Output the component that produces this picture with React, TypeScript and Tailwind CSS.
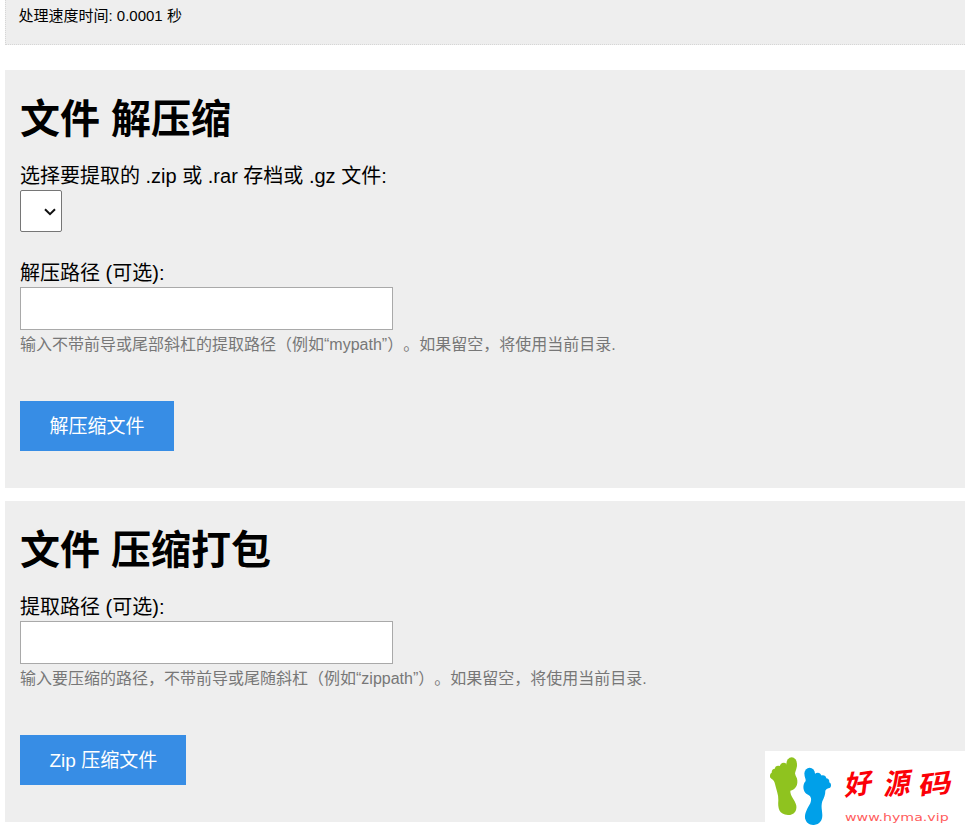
import type { ReactNode } from "react";
import { clsx } from "clsx";

const FUENTE = "font-['Liberation_Sans','Noto_Sans_CJK_SC',sans-serif]";

function Panel({ titulo, className, children }: { titulo: string; className?: string; children: ReactNode }) {
  return (
    <section className={clsx("bg-[#eeeeee] px-[15px] pt-5", className)}>
      <h1 className="h-[58px] text-[40px] leading-[58px] font-bold whitespace-nowrap">{titulo}</h1>
      {children}
    </section>
  );
}

function Campo({ id, label, ayuda }: { id: string; label: string; ayuda: string }) {
  return (
    <div>
      <label htmlFor={id} className="block h-[26px] text-[20px] leading-[26px]">{label}</label>
      <input id={id} type="text" className="mt-px block h-[43px] w-[373px] border border-[#a9a9a9] bg-white px-2 text-lg" />
      <p className="h-[30px] text-[16px] leading-[30px] whitespace-nowrap text-[#777777] [text-spacing-trim:space-all]">{ayuda}</p>
    </div>
  );
}

function Boton({ className, children }: { className?: string; children: ReactNode }) {
  return (
    <button
      type="button"
      className={clsx("mt-[41px] block h-[50px] bg-[#378de5] pt-0.5 pl-[29.5px] text-left text-[19px] whitespace-nowrap text-white", className)}
    >
      {children}
    </button>
  );
}

function Marca() {
  return (
    <div className="fixed top-[751px] left-[765px] h-20 w-[200px] bg-white">
      <svg viewBox="0 0 600 240" className="block h-20 w-[200px]">
        <g fill="#8fc31f">
          <ellipse cx="80" cy="38" rx="16" ry="19" />
          <ellipse cx="56" cy="49" rx="12" ry="14" />
          <ellipse cx="40" cy="57" rx="11" ry="13" />
          <ellipse cx="30" cy="65" rx="10" ry="12" />
          <ellipse cx="23" cy="74" rx="8" ry="9" />
          <path d="M15 74C17 85 28 85 30 99C33 114 41 131 40 148C38 172 42 191 69 192C88 192 96 179 94 164C91 147 75 136 76 119C90 115 98 105 97 89C97 80 91 76 90 67C92 58 96 52 96 40L62 43L25 66Z" />
        </g>
        <g fill="#00a0e9">
          <ellipse cx="134" cy="68" rx="16" ry="18" />
          <ellipse cx="158" cy="78" rx="12" ry="13" />
          <ellipse cx="173" cy="85" rx="11" ry="12" />
          <ellipse cx="183" cy="93" rx="10" ry="11" />
          <ellipse cx="190" cy="103" rx="8" ry="9" />
          <path d="M119 74C121 85 125 88 119 94C112 106 115 122 125 129C137 134 142 142 136 157C128 172 119 184 120 202C124 217 134 223 147 222C164 220 172 209 172 193C172 178 167 168 172 151C177 139 181 132 181 119C184 112 195 112 197 102L181 84L145 66Z" />
        </g>
        <g fill="#fb0007" fontFamily="'Noto Sans CJK SC', sans-serif" fontWeight="700">
          <text fontSize="84" transform="translate(238 134) skewX(-15) rotate(-8)" textLength="80" lengthAdjust="spacingAndGlyphs">好</text>
          <text fontSize="88" transform="translate(355 133) skewX(-15) rotate(-6)" textLength="78" lengthAdjust="spacingAndGlyphs">源</text>
          <text fontSize="80" transform="translate(459 134) skewX(-15) rotate(-8)" textLength="98" lengthAdjust="spacingAndGlyphs">码</text>
        </g>
        <text
          x="240"
          y="209"
          fill="#ff5c5c"
          fontFamily="'DejaVu Sans', sans-serif"
          fontSize="34"
          textLength="311"
          lengthAdjust="spacingAndGlyphs"
        >
          www.hyma.vip
        </text>
      </svg>
    </div>
  );
}

export default function App() {
  return (
    <main className={clsx("h-[831px] overflow-hidden bg-white pl-[5px] text-black", FUENTE)}>
      <p className="h-[45px] border-b border-l border-dotted border-[#d6d6d6] bg-[#eeeeee] pt-1 pl-[12.5px] text-[15px] leading-6">
        处理速度时间: 0.0001 秒
      </p>

      <Panel titulo="文件 解压缩" className="mt-[25px] h-[418px]">
        <label htmlFor="archivo" className="mt-[15px] block h-[26px] text-[20px] leading-[26px]">
          选择要提取的 .zip 或 .rar 存档或 .gz 文件:
        </label>
        <div className="relative mt-px h-[42px] w-[42px]">
          <select id="archivo" className="h-full w-full appearance-none rounded-[2px] border border-[#767676] bg-white" />
          <svg viewBox="0 0 12 8" className="pointer-events-none absolute top-[18px] left-6 h-2 w-3">
            <path d="M1 1.2L6 6.2L11 1.2" fill="none" stroke="#101010" strokeWidth="2" />
          </svg>
        </div>
        <div className="mt-7">
          <Campo
            id="destino"
            label="解压路径 (可选):"
            ayuda="输入不带前导或尾部斜杠的提取路径（例如“mypath”）。如果留空，将使用当前目录."
          />
        </div>
        <Boton className="w-[154px]">解压缩文件</Boton>
      </Panel>

      <Panel titulo="文件 压缩打包" className="mt-[13px] h-[321px]">
        <div className="mt-[15px]">
          <Campo
            id="origen"
            label="提取路径 (可选):"
            ayuda="输入要压缩的路径，不带前导或尾随斜杠（例如“zippath”）。如果留空，将使用当前目录."
          />
        </div>
        <Boton className="w-[166px]">Zip 压缩文件</Boton>
      </Panel>

      <Marca />
    </main>
  );
}
